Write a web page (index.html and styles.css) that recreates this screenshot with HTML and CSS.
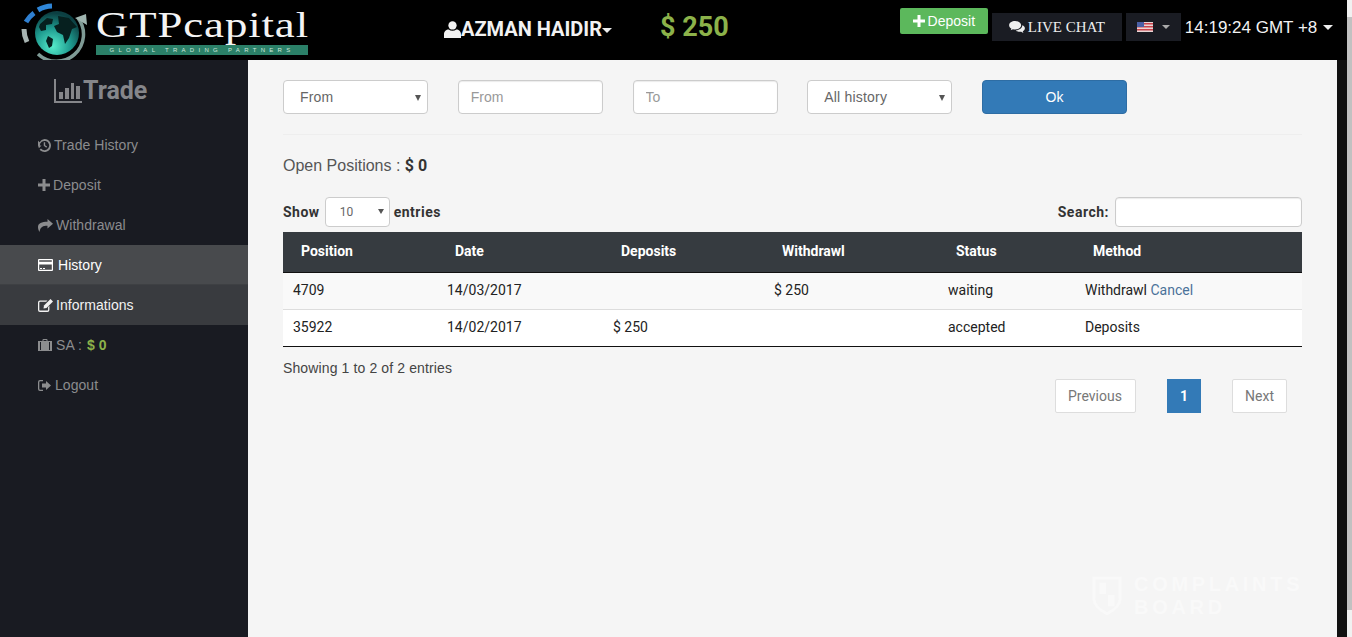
FILE: index.html
```html
<!DOCTYPE html>
<html lang="en">
<head>
    <meta charset="UTF-8">
    <meta name="viewport" content="width=device-width, initial-scale=1.0">
    <title>GTPcapital - History</title>
    <link rel="stylesheet" href="styles.css">
</head>
<body>
    <div class="page">
        <header class="topbar">
            <a class="logo" href="#">
                <svg class="logo-globe" viewBox="0 0 68 60" width="68" height="60">
                    <defs>
                        <radialGradient id="sea" cx="40%" cy="80%" r="75%">
                            <stop offset="0" stop-color="#56eccb"/>
                            <stop offset="0.55" stop-color="#1d9a8e"/>
                            <stop offset="1" stop-color="#0c3f42"/>
                        </radialGradient>
                    </defs>
                    <circle cx="37" cy="33" r="22" fill="url(#sea)"/>
                    <path d="M20 24l7-6 6 1-1 5-6 1 0 5-5 1-2-4zM38 16l11 2 8 9-5 2-3 9-4 6-2-9-6-3-3-6 5-2zM28 36l5 3-1 7-3 2-3-7z" fill="#06201f"/>
                    <path d="M58 18a27 27 0 0 1-40 36" fill="none" stroke="#7f9b96" stroke-width="3.500"/>
                    <path d="M55 18l11-4 1 11z" fill="#9fb5b0"/>
                    <path d="M7 42a29 29 0 0 1-3-13" fill="none" stroke="#a8b4b2" stroke-width="5"/>
                    <path d="M6 22a29 29 0 0 1 8-9" fill="none" stroke="#2f7fd0" stroke-width="5"/>
                    <path d="M18 10a29 29 0 0 1 14-4" fill="none" stroke="#2f86d8" stroke-width="5"/>
                </svg>
                <span class="logo-text">
                    <span class="logo-name">GTPcapital</span>
                    <span class="logo-tag">GLOBAL TRADING PARTNERS</span>
                </span>
            </a>
            <div class="user">
                <svg class="icon-user" viewBox="0 0 16 16" width="17" height="17"><circle cx="8" cy="4.200" r="3.900" fill="currentColor"/><path d="M0 16v-3.400C0 9.600 2.200 8 4.400 8c1 .8 2.200 1.200 3.600 1.200S10.600 8.800 11.600 8C13.800 8 16 9.600 16 12.600V16z" fill="currentColor"/></svg>
                <span>AZMAN HAIDIR</span>
                <span class="caret caret-user"></span>
            </div>
            <div class="balance">$ 250</div>
            <div class="top-actions">
                <a class="btn-deposit" href="#">
                    <svg viewBox="0 0 12 12" width="12" height="12"><path d="M4.500 0h3v4.500H12v3H7.500V12h-3V7.500H0v-3h4.500z" fill="currentColor"/></svg>
                    Deposit
                </a>
                <a class="btn-chat" href="#">
                    <svg viewBox="0 0 17 14" width="16" height="13"><path d="M6.500 0C2.900 0 0 2 0 4.600c0 1.500 1 2.800 2.500 3.700L1.700 10l2.400-1.100c.8.200 1.600.3 2.400.3 3.600 0 6.500-2 6.500-4.600S10.100 0 6.500 0z" fill="currentColor"/><path d="M14.200 4.600c0 3-3.100 5.300-7 5.500 1 1 2.600 1.600 4.300 1.600.5 0 1-.1 1.500-.2L15.400 13l-.7-1.900C16 10.300 17 9.100 17 7.800c0-1.300-1.100-2.500-2.800-3.200z" fill="currentColor"/></svg>
                    LIVE CHAT
                </a>
                <a class="btn-lang" href="#">
                    <svg viewBox="0 0 16 10" width="16" height="10">
                        <rect width="16" height="10" fill="#e9d6d6"/>
                        <path d="M0 1h16v1.500H0zM0 4h16v1.500H0zM0 7h16v1.500H0z" fill="#c9444c"/>
                        <rect width="7" height="5" fill="#4a5fa5"/>
                    </svg>
                    <span class="caret caret-lang"></span>
                </a>
                <div class="clock">14:19:24 GMT +8 <span class="caret caret-clock"></span></div>
            </div>
        </header>

        <div class="body-row">
            <aside class="sidebar">
                <h2 class="side-title">
                    <svg viewBox="0 0 28 24" width="28" height="24"><path d="M0 0h2v22h26v2H0z" fill="currentColor"/><path d="M5 13h4v7H5zM11 9h4v11h-4zM17 4h3v16h-3zM22 7h4v13h-4z" fill="currentColor"/></svg>
                    Trade
                </h2>
                <ul class="side-menu">
                    <li><a href="#">
                        <svg viewBox="0 0 14 14" width="13" height="13"><path d="M7 0a7 7 0 1 1-5.300 11.600l1.500-1.300A5 5 0 1 0 2 7h1.800L1 10 0 7h0V2l1.700 1.500A7 7 0 0 1 7 0z" fill="currentColor"/><path d="M6.200 3.500h1.500v3.200l2.100 1.500-.9 1.200-2.700-2z" fill="currentColor"/></svg>
                        Trade History</a></li>
                    <li><a href="#">
                        <svg viewBox="0 0 12 12" width="12" height="12"><path d="M4.500 0h3v4.500H12v3H7.500V12h-3V7.500H0v-3h4.500z" fill="currentColor"/></svg>
                        Deposit</a></li>
                    <li><a href="#">
                        <svg viewBox="0 0 15 13" width="15" height="13"><path d="M9.500 0L15 4.700 9.500 9.400V6.700C5 6.700 2.300 7.800 1.500 13 .3 10.800 0 9.500 0 8c0-3.800 3.800-5.300 9.500-5.300z" fill="currentColor"/></svg>
                        Withdrawal</a></li>
                    <li class="is-active"><a href="#">
                        <svg viewBox="0 0 15 12" width="15" height="12"><path fill-rule="evenodd" d="M1 0h13a1 1 0 0 1 1 1v10a1 1 0 0 1-1 1H1a1 1 0 0 1-1-1V1a1 1 0 0 1 1-1zm.2 2.800h12.600V1.200H1.200zm0 2.700v5.300h12.600V5.500zM2 9h2v1H2zm3 0h2v1H5z" fill="currentColor"/></svg>
                        History</a></li>
                    <li class="is-hover"><a href="#">
                        <svg viewBox="0 0 15 13" width="15" height="13"><path d="M2 1.500h7.500L8.200 2.800H2.200a.9.900 0 0 0-.9.900v7a.9.900 0 0 0 .9.900h7a.9.900 0 0 0 .9-.900V8l1.300-1.300V11a2 2 0 0 1-2 2H2a2 2 0 0 1-2-2V3.500a2 2 0 0 1 2-2z" fill="currentColor"/><path d="M12.500 0L15 2.500 8.500 9 5.500 9.500 6 6.500z" fill="currentColor"/></svg>
                        Informations</a></li>
                    <li class="side-sa"><a href="#">
                        <svg viewBox="0 0 14 12" width="14" height="12"><path fill-rule="evenodd" d="M4.500 2V1a1 1 0 0 1 1-1h3a1 1 0 0 1 1 1v1H14v10H0V2zm1 0h3V1h-3zM2 3v8h1V3zm9 0v8h1V3z" fill="currentColor"/></svg>
                        SA : <b class="side-money">$ 0</b></a></li>
                    <li class="side-logout"><a href="#">
                        <svg viewBox="0 0 13 11" width="13" height="11"><path d="M2 0h3v1.300H2.200a.9.900 0 0 0-.9.900v6.600a.9.900 0 0 0 .9.900H5V11H2a2 2 0 0 1-2-2V2a2 2 0 0 1 2-2z" fill="currentColor"/><path d="M8 1l5 4.500L8 10V7.500H4v-4h4z" fill="currentColor"/></svg>
                        Logout</a></li>
                </ul>
            </aside>

            <main class="content">
                <form class="filters">
                    <div class="select-box"><select><option>From</option></select></div>
                    <input type="text" placeholder="From">
                    <input type="text" placeholder="To">
                    <div class="select-box"><select><option>All history</option></select></div>
                    <button type="button" class="btn-ok">Ok</button>
                </form>
                <hr class="divider">
                <p class="open-pos">Open Positions : <b>$ 0</b></p>

                <div class="table-tools">
                    <label class="tool-label">Show
                        <span class="select-box select-small"><select><option>10</option></select></span>
                        entries</label>
                    <label class="tool-label">Search: <input type="text" class="search-input"></label>
                </div>

                <table class="history">
                    <thead>
                        <tr>
                            <th class="col-pos">Position</th>
                            <th class="col-date">Date</th>
                            <th class="col-dep">Deposits</th>
                            <th class="col-wit">Withdrawl</th>
                            <th class="col-status">Status</th>
                            <th class="col-method">Method</th>
                        </tr>
                    </thead>
                    <tbody>
                        <tr class="odd">
                            <td>4709</td>
                            <td>14/03/2017</td>
                            <td></td>
                            <td>$ 250</td>
                            <td>waiting</td>
                            <td>Withdrawl <a href="#">Cancel</a></td>
                        </tr>
                        <tr>
                            <td>35922</td>
                            <td>14/02/2017</td>
                            <td>$ 250</td>
                            <td></td>
                            <td>accepted</td>
                            <td>Deposits</td>
                        </tr>
                    </tbody>
                </table>

                <div class="table-info">Showing 1 to 2 of 2 entries</div>
                <div class="pager">
                    <a href="#" class="pager-prev">Previous</a>
                    <a href="#" class="current">1</a>
                    <a href="#">Next</a>
                </div>
            </main>
            <div class="side-strip"></div>
        </div>

        <div class="watermark">
            <svg viewBox="0 0 32 44" width="30" height="44"><path d="M2 4h28v22c0 8-8 13-14 16C10 39 2 34 2 26z" fill="none" stroke="currentColor" stroke-width="3"/><path d="M8 9h7v12H8zM17 22h7v12h-7z" fill="currentColor"/></svg>
            <div class="watermark-text">COMPLAINTS<br>BOARD</div>
        </div>
    </div>
    <div class="scrollbar"><div class="scroll-thumb"></div></div>
</body>
</html>
```

FILE: styles.css
```css
* {
    box-sizing: border-box;
}

html, body {
    height: 100%;
}

body {
    margin: 0;
    overflow: hidden;
    display: flex;
    font-family: "Liberation Sans", Arial, sans-serif;
    font-size: 14px;
    color: #333;
    background: #f5f5f5;
}

a {
    text-decoration: none;
    color: inherit;
}

.page {
    position: relative;
    width: 1347px;
    height: 637px;
    display: flex;
    flex-direction: column;
}

.scrollbar {
    width: 5px;
    height: 637px;
    padding-top: 17px;
    background: #f1f1f1;
}

.scroll-thumb {
    height: 593px;
    background: #c1c1c1;
}

/* top bar */
.topbar {
    height: 60px;
    flex: none;
    display: flex;
    background: #000;
    color: #fff;
}

.logo {
    width: 308px;
    margin-left: 20px;
    display: flex;
    flex: none;
}

.logo-globe {
    flex: none;
    margin-right: 8px;
}

.logo-text {
    display: flex;
    flex-direction: column;
}

/* the logo type is a wide cut, stretch the serif to get there */
.logo-name {
    margin-top: 7px;
    font-family: "Liberation Serif", serif;
    font-size: 35px;
    line-height: 37px;
    letter-spacing: 0.7px;
    white-space: nowrap;
    color: #f4f4f4;
    transform: scaleX(1.28);
    transform-origin: left center;
}

.logo-tag {
    width: 212px;
    height: 10px;
    margin-top: 1px;
    background: #2b8068;
    color: #cfe8dd;
    font-size: 6px;
    line-height: 10px;
    text-align: center;
    letter-spacing: 4.3px;
    white-space: nowrap;
}

.user {
    margin-left: 116px;
    margin-top: 19px;
    height: 20px;
    display: flex;
    align-items: center;
    font-family: Roboto, sans-serif;
    font-weight: 700;
    font-size: 20px;
    color: #f2f2f2;
    white-space: nowrap;
}

.icon-user {
    flex: none;
}

.caret {
    display: inline-block;
    width: 0;
    height: 0;
    border-left: 5px solid transparent;
    border-right: 5px solid transparent;
    border-top: 5px solid #eee;
}

.caret-user {
    margin-top: 3px;
}

.balance {
    margin-left: 48px;
    margin-top: 11px;
    font-family: Roboto, sans-serif;
    font-weight: 700;
    font-size: 27px;
    line-height: 32px;
    color: #8cb24a;
    white-space: nowrap;
}

.top-actions {
    margin-left: auto;
    display: flex;
    align-items: flex-start;
    padding-right: 14px;
}

.btn-deposit {
    width: 88px;
    height: 26px;
    margin-top: 8px;
    display: flex;
    align-items: center;
    justify-content: center;
    gap: 3px;
    background: #5cb85c;
    border-radius: 2px;
    font-size: 14px;
    color: #fff;
}

.btn-chat {
    width: 130px;
    height: 28px;
    margin-top: 13px;
    margin-left: 4px;
    display: flex;
    align-items: center;
    justify-content: center;
    gap: 3px;
    background: #1a1c23;
    font-family: "Liberation Serif", serif;
    font-size: 15px;
    color: #eee;
}

.btn-lang {
    width: 55px;
    height: 28px;
    margin-top: 13px;
    margin-left: 4px;
    display: flex;
    align-items: center;
    justify-content: center;
    gap: 9px;
    background: #1a1c23;
}

.caret-lang {
    border-left-width: 4px;
    border-right-width: 4px;
    border-top-width: 4px;
    border-top-color: #aaa;
}

.clock {
    margin-top: 17px;
    margin-left: 4px;
    font-size: 17px;
    line-height: 22px;
    color: #f2f2f2;
    white-space: nowrap;
}

.caret-clock {
    vertical-align: 3px;
    margin-left: 1px;
}

/* sidebar */
.body-row {
    flex: 1;
    display: flex;
    min-height: 0;
}

.sidebar {
    width: 248px;
    flex: none;
    background: #191b22;
    color: #8b8c8e;
}

.side-title {
    margin: 0;
    height: 65px;
    padding: 0 0 4px 54px;
    display: flex;
    align-items: center;
    gap: 1px;
    font-family: Roboto, sans-serif;
    font-size: 25px;
    font-weight: 700;
    color: #85868a;
}

.side-menu {
    margin: 0;
    padding: 0;
    list-style: none;
}

.side-menu li a {
    height: 40px;
    padding-left: 38px;
    display: flex;
    align-items: center;
    gap: 3px;
    font-size: 14px;
    letter-spacing: 0.05px;
}

.side-menu .is-active {
    background: #484a4d;
    color: #fff;
    border-bottom: 1px solid #3e4043;
}

.side-menu .is-active a {
    height: 39px;
    gap: 5px;
}

.side-menu .is-hover {
    background: #393b3f;
    color: #f2f2f2;
}

.side-menu .side-sa a {
    gap: 4px;
}

.side-menu .side-logout a {
    gap: 4px;
}

.side-money {
    margin-left: 1px;
    color: #8cb24a;
}

/* main part */
.content {
    flex: 1;
    min-width: 0;
    padding: 20px 35px 0;
}

.side-strip {
    width: 10px;
    flex: none;
    background: #111;
}

.filters {
    display: grid;
    grid-template-columns: repeat(5, 145px);
    column-gap: 29.75px;
}

.filters input,
.search-input {
    height: 34px;
    padding: 0 12px;
    border: 1px solid #ccc;
    border-radius: 4px;
    background: #fff;
    font-family: inherit;
    font-size: 14px;
    color: #555;
    box-shadow: inset 0 1px 1px rgba(0, 0, 0, 0.08);
}

.filters input::placeholder {
    color: #999;
}

.select-box {
    position: relative;
    display: block;
}

.select-box select {
    width: 100%;
    height: 34px;
    padding: 0 16px;
    appearance: none;
    border: 1px solid #ccc;
    border-radius: 4px;
    background: #fff;
    font-family: inherit;
    font-size: 14px;
    letter-spacing: 0.2px;
    color: #666;
}

.select-box::after {
    content: "";
    position: absolute;
    top: 15px;
    right: 7px;
    border-left: 3px solid transparent;
    border-right: 3px solid transparent;
    border-top: 6px solid #555;
}

.btn-ok {
    height: 34px;
    border: 1px solid #2e6da4;
    border-radius: 4px;
    background: #337ab7;
    color: #fff;
    font-family: inherit;
    font-size: 14px;
}

.divider {
    margin: 20px 0 0;
    border: 0;
    border-top: 1px solid #eee;
}

.open-pos {
    margin: 21px 0 0;
    font-size: 16px;
    line-height: 20px;
    color: #555;
}

.open-pos b {
    font-family: Roboto, sans-serif;
    color: #333;
}

.table-tools {
    margin-top: 21px;
    height: 30px;
    display: flex;
    justify-content: space-between;
}

.tool-label {
    display: flex;
    align-items: center;
    gap: 4px;
    font-family: Roboto, sans-serif;
    font-weight: 700;
    font-size: 14px;
    letter-spacing: 0.5px;
}

.select-small {
    width: 65px;
    margin-left: 1px;
}

.select-small select {
    height: 30px;
    padding: 0 14px;
    font-family: Roboto, sans-serif;
    font-size: 12px;
}

.select-small::after {
    top: 12px;
    right: 6px;
    border-top-width: 5px;
}

.search-input {
    width: 187px;
    height: 30px;
    margin-left: 2px;
}

.history {
    width: 100%;
    margin-top: 5px;
    table-layout: fixed;
    border-collapse: collapse;
    font-family: Roboto, sans-serif;
    font-size: 14px;
    color: #222;
}

.history th {
    height: 40px;
    padding: 0 18px 2px;
    background: #363b40;
    border-bottom: 1px solid #111;
    color: #fff;
    text-align: left;
    font-weight: 700;
}

.col-pos { width: 154px; }
.col-date { width: 166px; }
.col-dep { width: 161px; }
.col-wit { width: 174px; }
.col-status { width: 137px; }

.history td {
    height: 37px;
    padding: 0 10px 2px;
    background: #fff;
    border-bottom: 1px solid #111;
}

.history .odd td {
    background: #f9f9f9;
    border-bottom: 1px solid #ddd;
}

.history a {
    color: #4a7299;
}

.table-info {
    margin-top: 13px;
    line-height: 17px;
    letter-spacing: 0.12px;
    color: #444;
}

.pager {
    margin-top: 2px;
    padding-right: 15px;
    display: flex;
    justify-content: flex-end;
    gap: 31px;
}

.pager a {
    height: 34px;
    padding: 0 12px;
    display: flex;
    align-items: center;
    border: 1px solid #ddd;
    border-radius: 2px;
    background: #fff;
    font-family: Roboto, sans-serif;
    color: #777;
}

.pager .pager-prev {
    width: 81px;
}

.pager .current {
    border-color: #337ab7;
    border-radius: 0;
    background: #337ab7;
    color: #fff;
    font-weight: 700;
}

.watermark {
    position: absolute;
    left: 1092px;
    top: 573px;
    display: flex;
    gap: 12px;
    color: #f9f9f9;
}

.watermark-text {
    font-family: "Liberation Sans", sans-serif;
    font-size: 20px;
    font-weight: 700;
    line-height: 23px;
    letter-spacing: 3.7px;
}
```
